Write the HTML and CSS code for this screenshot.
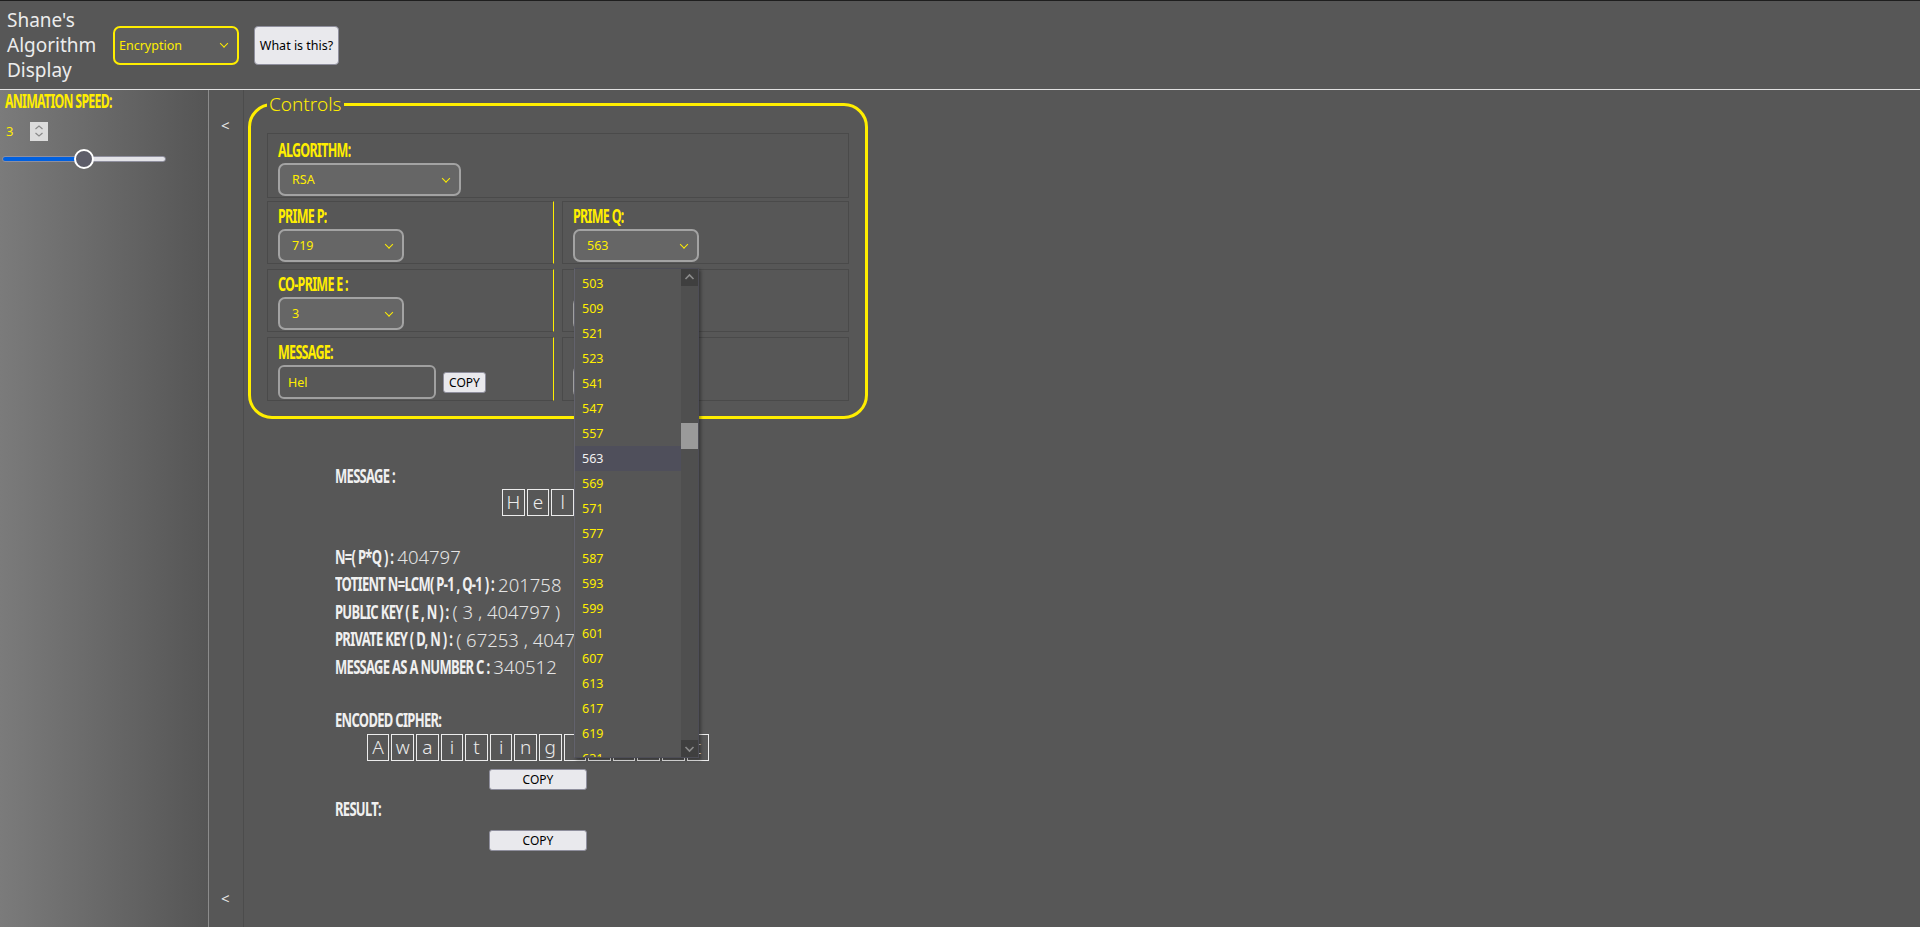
FILE: index.html
```html
<!DOCTYPE html>
<html lang="en">
<head>
<meta charset="utf-8">
<title>Shane's Algorithm Display</title>
<link rel="stylesheet" href="styles.css">
</head>
<body>
<header class="topbar">
  <h1 class="brand">Shane's Algorithm Display</h1>
  <div class="select-wrap select-wrap--mode">
    <select class="select select--mode"><option>Encryption</option></select>
  </div>
  <button class="btn btn--help">What is this?</button>
</header>
<div class="layout">
  <aside class="sidebar">
    <div class="side-label">ANIMATION SPEED:</div>
    <div class="speed-num">
      <span class="speed-val">3</span>
      <span class="spin">
        <svg width="18" height="18" viewBox="0 0 18 18"><path d="M5.5 7 L9 4 L12.5 7" fill="none" stroke="#8a8a8a" stroke-width="1.2"/><path d="M5.5 11 L9 14 L12.5 11" fill="none" stroke="#8a8a8a" stroke-width="1.2"/></svg>
      </span>
    </div>
    <input type="range" class="speed-range" min="1" max="5" value="3">
  </aside>
  <div class="collapse-col">
    <span class="collapse">&lt;</span>
    <span class="collapse">&lt;</span>
  </div>
  <main class="content">
    <fieldset class="controls">
      <legend>Controls</legend>
      <div class="row row--first">
        <div class="cell">
          <div class="field-label">ALGORITHM:</div>
          <div class="select-wrap"><select class="select select--algo"><option>RSA</option></select></div>
        </div>
      </div>
      <div class="row">
        <div class="cell cell--left">
          <div class="field-label">PRIME P:</div>
          <div class="select-wrap"><select class="select select--num"><option>719</option></select></div>
        </div>
        <div class="cell">
          <div class="field-label">PRIME Q:</div>
          <div class="select-wrap">
            <select class="select select--num"><option>563</option></select>
            <div class="dropdown">
              <ul class="dd-list">
                <li class="dd-item">503</li>
                <li class="dd-item">509</li>
                <li class="dd-item">521</li>
                <li class="dd-item">523</li>
                <li class="dd-item">541</li>
                <li class="dd-item">547</li>
                <li class="dd-item">557</li>
                <li class="dd-item dd-item--active">563</li>
                <li class="dd-item">569</li>
                <li class="dd-item">571</li>
                <li class="dd-item">577</li>
                <li class="dd-item">587</li>
                <li class="dd-item">593</li>
                <li class="dd-item">599</li>
                <li class="dd-item">601</li>
                <li class="dd-item">607</li>
                <li class="dd-item">613</li>
                <li class="dd-item">617</li>
                <li class="dd-item">619</li>
                <li class="dd-item">631</li>
              </ul>
              <div class="dd-scroll">
                <span class="dd-btn"><svg width="17" height="17" viewBox="0 0 17 17"><path d="M4.5 10 L8.5 6 L12.5 10" fill="none" stroke="#8c8c8c" stroke-width="1.6"/></svg></span>
                <div class="dd-track"><div class="dd-thumb"></div></div>
                <span class="dd-btn"><svg width="17" height="17" viewBox="0 0 17 17"><path d="M4.5 7 L8.5 11 L12.5 7" fill="none" stroke="#8c8c8c" stroke-width="1.6"/></svg></span>
              </div>
            </div>
          </div>
        </div>
      </div>
      <div class="row">
        <div class="cell cell--left">
          <div class="field-label">CO-PRIME E :</div>
          <div class="select-wrap"><select class="select select--num"><option>3</option></select></div>
        </div>
        <div class="cell">
          <div class="field-label">&nbsp;</div>
          <div class="select-wrap"><select class="select select--num"><option></option></select></div>
        </div>
      </div>
      <div class="row">
        <div class="cell cell--left">
          <div class="field-label">MESSAGE:</div>
          <div class="msg-line">
            <input class="msg-input" type="text" value="Hel">
            <button class="btn btn--copy-sm">COPY</button>
          </div>
        </div>
        <div class="cell">
          <div class="field-label">&nbsp;</div>
          <div class="select-wrap"><select class="select select--num"><option></option></select></div>
        </div>
      </div>
    </fieldset>

    <section class="output">
      <div class="out-label">MESSAGE :</div>
      <div class="letters">
        <span class="letter">H</span><span class="letter">e</span><span class="letter">l</span>
      </div>

      <div class="info">
        <div class="info-line"><span class="out-label">N=( P*Q ) :</span><span class="info-val">404797</span></div>
        <div class="info-line"><span class="out-label">TOTIENT N=LCM( P-1 , Q-1 ) :</span><span class="info-val">201758</span></div>
        <div class="info-line"><span class="out-label">PUBLIC KEY ( E , N ) :</span><span class="info-val">( 3 , 404797 )</span></div>
        <div class="info-line"><span class="out-label">PRIVATE KEY ( D, N ) :</span><span class="info-val">( 67253 , 404797 )</span></div>
        <div class="info-line"><span class="out-label">MESSAGE AS A NUMBER C :</span><span class="info-val">340512</span></div>
      </div>

      <div class="out-label out-label--cipher">ENCODED CIPHER:</div>
      <div class="letters letters--cipher">
        <span class="letter">A</span><span class="letter">w</span><span class="letter">a</span><span class="letter">i</span><span class="letter">t</span><span class="letter">i</span><span class="letter">n</span><span class="letter">g</span><span class="letter">&nbsp;</span><span class="letter">i</span><span class="letter">n</span><span class="letter">p</span><span class="letter">u</span><span class="letter">t</span>
      </div>
      <div class="copy-row"><button class="btn btn--copy">COPY</button></div>

      <div class="out-label out-label--result">RESULT:</div>
      <div class="copy-row copy-row--result"><button class="btn btn--copy">COPY</button></div>
    </section>
  </main>
</div>
</body>
</html>
```

FILE: styles.css
```css
* { box-sizing: border-box; }

html, body {
  margin: 0;
  height: 100%;
}

body {
  background: #575757;
  border-top: 1px solid #1e1e1e;
  font-family: "Noto Sans", "Open Sans", sans-serif;
  color: #e6e6e6;
  overflow: hidden;
}

/* ---------- condensed display face (Bebas-like): small bold, stretched tall ---------- */
.side-label,
.field-label,
.out-label {
  font-family: "Noto Sans", "Open Sans", sans-serif;
  font-weight: 700;
  letter-spacing: -0.7px;
  transform: scaleY(1.55);
  transform-origin: 50% 55%;
}

/* ---------- header ---------- */
.topbar {
  display: flex;
  align-items: center;
  gap: 15px;
  height: 89px;
  padding-left: 7px;
  border-bottom: 1px solid #e2e2e2;
}

.brand {
  margin: 0;
  width: 91px;
  font-size: 19px;
  line-height: 25px;
  font-weight: 400;
  color: #ececec;
}

.select-wrap {
  position: relative;
  display: inline-block;
}

.select-wrap::after {
  content: "";
  position: absolute;
  right: 12px;
  top: 50%;
  width: 5px;
  height: 5px;
  border-right: 1.5px solid #ffee00;
  border-bottom: 1.5px solid #ffee00;
  transform: translateY(-75%) rotate(45deg);
  pointer-events: none;
}

.select {
  appearance: none;
  -webkit-appearance: none;
  display: block;
  font-family: "Noto Sans", "Open Sans", sans-serif;
  font-size: 12.5px;
  color: #ffee00;
  background: #666666;
  border: 2px solid #a3a3a3;
  border-radius: 7px;
  padding: 0 0 0 12px;
  height: 33px;
  outline: none;
}

.select--mode {
  width: 126px;
  height: 39px;
  padding-left: 4px;
  border-color: #ffee00;
  background: #5e5e5e;
}

.select--algo { width: 183px; }
.select--num { width: 126px; }

.btn {
  font-family: "Noto Sans", "Open Sans", sans-serif;
  background: #e9e9ed;
  color: #000;
  border: 1px solid #8f8f9d;
  border-radius: 4px;
  padding: 0;
  cursor: pointer;
}

.btn--help {
  width: 85px;
  height: 39px;
  font-size: 12.5px;
}

/* ---------- layout ---------- */
.layout {
  display: flex;
  height: calc(100% - 89px);
}

.sidebar {
  width: 209px;
  flex: none;
  border-right: 1px solid #8c8c8c;
  background: linear-gradient(to right, #7b7b7b 0%, #555555 100%);
  padding: 1px 0 0 5px;
}

.side-label {
  color: #ffee00;
  font-size: 12.3px;
  line-height: 22px;
}

.speed-num {
  display: flex;
  align-items: center;
  height: 20px;
  margin-top: 8px;
}

.speed-val {
  width: 25px;
  color: #ffee00;
  font-size: 13px;
  padding-left: 1px;
}

.spin {
  display: flex;
  width: 18px;
  height: 19px;
  background: #dcdcdc;
  align-items: center;
  justify-content: center;
}

.speed-range {
  -webkit-appearance: none;
  appearance: none;
  display: block;
  width: 164px;
  height: 20px;
  margin: 8px 0 0 -3px;
  background: transparent;
}

.speed-range::-webkit-slider-runnable-track {
  height: 6px;
  border-radius: 3px;
  background: linear-gradient(to right, #0060df 0%, #0060df 50%, #e3e3e8 50%, #e3e3e8 100%);
  border: 1px solid #8f8f9d;
}

.speed-range::-webkit-slider-thumb {
  -webkit-appearance: none;
  width: 20px;
  height: 20px;
  margin-top: -8px;
  border-radius: 50%;
  background: #5d5d69;
  border: 2px solid #ffffff;
}

.collapse-col {
  width: 35px;
  flex: none;
  display: flex;
  flex-direction: column;
  justify-content: space-between;
  border-right: 1px solid #4c4c4c;
  padding: 25px 0 19px 12px;
}

.collapse {
  font-size: 15px;
  line-height: 20px;
  color: #e8e8e8;
}

.content {
  flex: 1;
  padding: 2px 0 0 4px;
}

/* ---------- controls fieldset ---------- */
.controls {
  width: 620px;
  margin: 0;
  min-width: 0;
  border: 3px solid #ffee00;
  border-radius: 24px;
  padding: 17px 16px 15px 16px;
}

.controls legend {
  padding: 0 2px;
  font-size: 19px;
  line-height: 24px;
  color: #ffee00;
  font-weight: 300;
}

.row {
  display: flex;
  gap: 8px;
  margin-top: 5px;
}

.row--first {
  margin-top: 0;
  margin-bottom: -2px;
}

.cell {
  flex: 1;
  border: 1px solid #4a4a4a;
  padding: 3px 10px 1px;
}

.row--first .cell {
  padding-top: 5px;
}

.cell--left {
  border-right-color: #ffee00;
}

.field-label {
  color: #ffee00;
  font-size: 12.5px;
  line-height: 24px;
}

.msg-line {
  display: flex;
  align-items: center;
  gap: 7px;
  height: 34px;
}

.msg-input {
  width: 158px;
  height: 34px;
  border: 2px solid #a0a0a0;
  border-radius: 6px;
  background: #585858;
  color: #ffee00;
  font-family: "Noto Sans", "Open Sans", sans-serif;
  font-size: 12.5px;
  padding: 0 8px;
  outline: none;
}

.btn--copy-sm {
  width: 43px;
  height: 21px;
  font-size: 12px;
  border-radius: 3px;
}

/* ---------- dropdown popup (open state) ---------- */
.dropdown {
  position: absolute;
  left: 1px;
  top: calc(100% + 6px);
  width: 125px;
  height: 490px;
  display: flex;
  background: #565656;
  border: 1px solid #4d4d56;
  border-left-color: #62626c;
  box-shadow: 2px 2px 3px rgba(0, 0, 0, 0.35);
  z-index: 5;
}

.dd-list {
  list-style: none;
  margin: 0;
  padding: 2px 0 0;
  flex: 1;
  overflow: hidden;
}

.dd-item {
  height: 25px;
  line-height: 25px;
  padding-left: 7px;
  font-size: 12.5px;
  color: #ffee00;
}

.dd-item--active {
  background: #4f4f5b;
  color: #f2f2f2;
}

.dd-scroll {
  width: 17px;
  flex: none;
  display: flex;
  flex-direction: column;
  background: #4f4f4f;
}

.dd-btn {
  display: block;
  height: 17px;
  background: #3f3f3f;
}

.dd-btn svg { display: block; }

.dd-track {
  flex: 1;
}

.dd-thumb {
  margin-top: 137px;
  height: 26px;
  background: #9a9a9a;
}

/* ---------- output ---------- */
.output {
  width: 406px;
  margin: 46px 0 0 87px;
}

.out-label {
  color: #f0f0f0;
  font-size: 13px;
  line-height: 22px;
}

.letters {
  display: flex;
  justify-content: center;
  gap: 2px;
  margin-top: 2px;
}

.letter {
  width: 22.6px;
  height: 27px;
  border: 1px solid #ececec;
  text-align: center;
  font-size: 19px;
  line-height: 24px;
  font-weight: 300;
  color: #ececec;
}

.info {
  margin-top: 27px;
}

.info-line {
  height: 27.5px;
  display: flex;
  align-items: center;
}

.info-val {
  margin-left: 4px;
  font-size: 18.5px;
  font-weight: 300;
  color: #e4e4e4;
}

.out-label--cipher {
  margin-top: 28px;
}

.letters--cipher {
  margin-top: 3px;
}

.copy-row {
  display: flex;
  justify-content: center;
  margin-top: 8px;
}

.btn--copy {
  width: 98px;
  height: 21px;
  font-size: 12px;
  border-radius: 3px;
}

.out-label--result {
  margin-top: 8px;
}

.copy-row--result {
  margin-top: 10px;
}
```
